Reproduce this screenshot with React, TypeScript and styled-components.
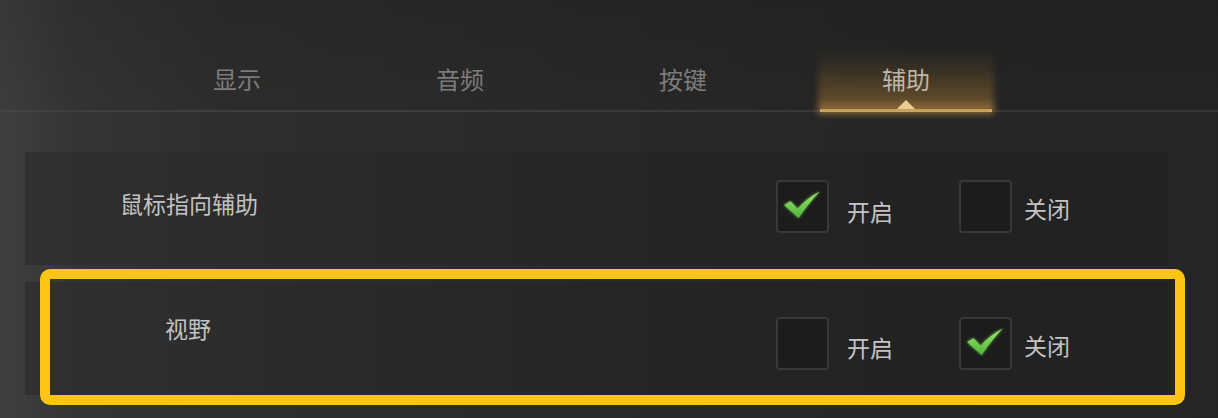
import React from "react";
import styled, { createGlobalStyle, css } from "styled-components";

const GlobalStyle = createGlobalStyle`
  html, body { margin: 0; padding: 0; background: #262626; }
  body { font-family: "Noto Sans CJK SC", "Noto Sans", sans-serif; }
`;

const Page = styled.div`
  width: 1218px;
  height: 418px;
  overflow: hidden;
  background:
    linear-gradient(180deg, rgba(0, 0, 0, 0.12) 0%, rgba(0, 0, 0, 0.04) 26%, rgba(0, 0, 0, 0) 27%),
    linear-gradient(90deg, #3f3f3f 0%, #353535 6%, #2e2e2e 18%, #2a2a2a 45%, #262626 75%, #252525 100%);
`;

const TabBar = styled.div`
  height: 110px;
  display: flex;
  align-items: flex-end;
  gap: 51px;
  padding-left: 151px;
  border-bottom: 2px solid;
  border-image: linear-gradient(90deg, rgba(255,255,255,0.03), rgba(255,255,255,0.09) 20%, rgba(255,255,255,0.08)) 1;
`;

const Tab = styled.div<{ $active?: boolean }>`
  position: relative;
  width: 172px;
  height: 60px;
  margin-bottom: -2px;
  display: flex;
  align-items: center;
  justify-content: center;
  border-bottom: 3px solid transparent;
  ${(p) =>
    p.$active &&
    css`
      border-bottom-color: #e7c98c;
      &::before {
        content: "";
        position: absolute;
        left: -2px;
        right: -2px;
        top: 0;
        bottom: -6px;
        background: linear-gradient(
          180deg,
          rgba(110, 82, 38, 0) 0%,
          rgba(120, 88, 38, 0.28) 35%,
          rgba(150, 110, 50, 0.55) 80%,
          rgba(190, 140, 65, 0.8) 92%,
          rgba(150, 105, 45, 0.35) 100%
        );
        filter: blur(3px);
      }
      &::after {
        content: "";
        position: absolute;
        left: 50%;
        bottom: 0;
        margin-left: -9px;
        border-left: 9px solid transparent;
        border-right: 9px solid transparent;
        border-bottom: 9px solid #e9cc92;
      }
    `}
`;

const TabText = styled.span<{ $active?: boolean }>`
  position: relative;
  font-size: 24px;
  line-height: 1;
  color: ${(p) => (p.$active ? "#bdb6aa" : "#7c7c7c")};
`;

const Content = styled.div`
  width: 1210px;
  padding: 40px 0 0 25px;
  box-sizing: border-box;
  display: flex;
  flex-direction: column;
  gap: 17px;
`;

const RowWrap = styled.div`
  position: relative;
  width: 1143px;
`;

const Row = styled.div`
  height: 113px;
  display: grid;
  grid-template-columns: 751px auto;
  align-items: start;
  background: linear-gradient(90deg, #303030 0%, #2a2a2a 25%, #242424 60%, #212121 100%);
`;

const Label = styled.div<{ $indent: number; $top: number }>`
  padding-left: ${(p) => p.$indent}px;
  margin-top: ${(p) => p.$top}px;
  font-size: 23px;
  line-height: 23px;
  color: #c2c2c2;
`;

const Options = styled.div<{ $top: number }>`
  margin-top: ${(p) => p.$top}px;
  display: grid;
  grid-template-columns: 183px 183px;
`;

const Option = styled.div<{ $gap: number }>`
  display: flex;
  align-items: center;
  gap: ${(p) => p.$gap}px;
`;

const Box = styled.div`
  width: 53px;
  height: 53px;
  box-sizing: border-box;
  border: 2px solid #383838;
  border-radius: 4px;
  background: #1c1c1c;
  display: flex;
  align-items: center;
  justify-content: center;
`;

const OptionText = styled.span<{ $drop: number }>`
  padding-top: ${(p) => p.$drop}px;
  font-size: 23px;
  line-height: 23px;
  color: #c4c4c4;
`;

const Highlight = styled.div`
  position: absolute;
  left: 15px;
  top: -13px;
  width: 1145px;
  height: 136px;
  box-sizing: border-box;
  border: 10px solid #fcc514;
  border-radius: 10px;
  pointer-events: none;
`;

const Check = () => (
  <svg width="53" height="53" viewBox="0 0 53 53" style={{ marginLeft: -2, marginTop: -2 }}>
    <defs>
      <linearGradient id="cg" x1="0" y1="0" x2="0" y2="1">
        <stop offset="0" stopColor="#9be86a" />
        <stop offset="1" stopColor="#4fb53a" />
      </linearGradient>
      <filter id="glow" x="-30%" y="-30%" width="160%" height="160%">
        <feGaussianBlur stdDeviation="1.5" result="b" />
        <feMerge>
          <feMergeNode in="b" />
          <feMergeNode in="SourceGraphic" />
        </feMerge>
      </filter>
    </defs>
    <path
      d="M8.5 26 L15 22 L22.5 30 Q32 19 45.5 12 Q34.5 23 23.5 39.5 Z"
      fill="url(#cg)"
      filter="url(#glow)"
    />
  </svg>
);

type Opt = { text: string; checked: boolean; gap: number; drop: number };

const Choice = ({ text, checked, gap, drop }: Opt) => (
  <Option $gap={gap}>
    <Box>{checked && <Check />}</Box>
    <OptionText $drop={drop}>{text}</OptionText>
  </Option>
);

export default function App() {
  return (
    <>
      <GlobalStyle />
      <Page>
        <TabBar>
          <Tab><TabText>显示</TabText></Tab>
          <Tab><TabText>音频</TabText></Tab>
          <Tab><TabText>按键</TabText></Tab>
          <Tab $active><TabText $active>辅助</TabText></Tab>
        </TabBar>
        <Content>
          <RowWrap>
            <Row>
              <Label $indent={95} $top={40}>鼠标指向辅助</Label>
              <Options $top={28}>
                <Choice text="开启" checked gap={18} drop={9} />
                <Choice text="关闭" checked={false} gap={12} drop={4} />
              </Options>
            </Row>
          </RowWrap>
          <RowWrap>
            <Row>
              <Label $indent={140} $top={35}>视野</Label>
              <Options $top={35}>
                <Choice text="开启" checked={false} gap={18} drop={8} />
                <Choice text="关闭" checked gap={12} drop={4} />
              </Options>
            </Row>
            <Highlight />
          </RowWrap>
        </Content>
      </Page>
    </>
  );
}
